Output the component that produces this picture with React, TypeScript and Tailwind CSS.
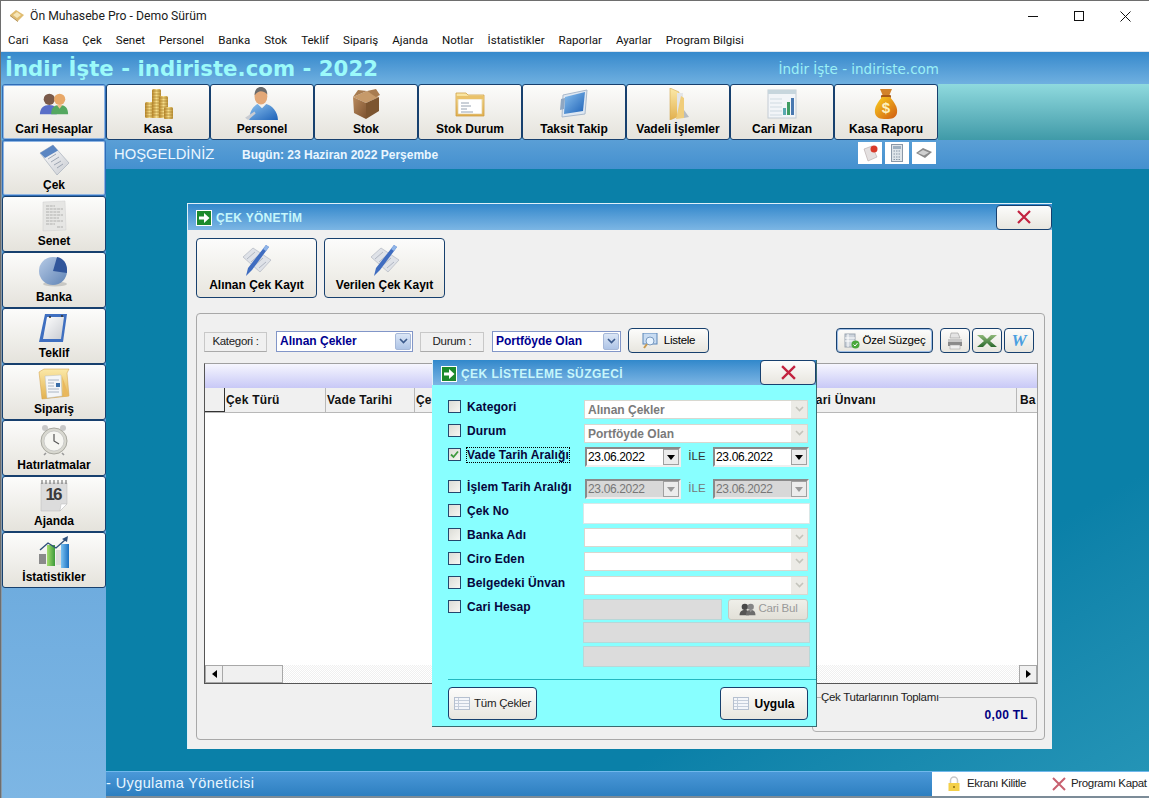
import React from "react";

const sans = "font-['Liberation_Sans',Arial,sans-serif]";

function Defs() {
  return (
    <svg className="absolute w-0 h-0" aria-hidden="true">
      <defs>
        <linearGradient id="gGold" x1="0" y1="0" x2="1" y2="0"><stop offset="0" stopColor="#b8862b" /><stop offset=".5" stopColor="#f6dd8a" /><stop offset="1" stopColor="#b98f35" /></linearGradient>
        <linearGradient id="gBlue" x1="0" y1="0" x2="1" y2="1"><stop offset="0" stopColor="#8bc1ee" /><stop offset="1" stopColor="#1d62b8" /></linearGradient>
        <linearGradient id="gFolder" x1="0" y1="0" x2="0" y2="1"><stop offset="0" stopColor="#fbe9a8" /><stop offset="1" stopColor="#e2b04e" /></linearGradient>
        <linearGradient id="gBox" x1="0" y1="0" x2="1" y2="1"><stop offset="0" stopColor="#b98a5c" /><stop offset="1" stopColor="#7d5330" /></linearGradient>
        <linearGradient id="gBag" x1="0" y1="0" x2="1" y2="1"><stop offset="0" stopColor="#fbd01f" /><stop offset="1" stopColor="#cf5a12" /></linearGradient>
        <linearGradient id="gPaper" x1="0" y1="0" x2="1" y2="1"><stop offset="0" stopColor="#ffffff" /><stop offset="1" stopColor="#c9ccd2" /></linearGradient>
        <linearGradient id="gPie" x1="0" y1="0" x2="1" y2="1"><stop offset="0" stopColor="#b7cbe6" /><stop offset="1" stopColor="#5f83b5" /></linearGradient>
        <linearGradient id="gGreen" x1="0" y1="0" x2="1" y2="0"><stop offset="0" stopColor="#a4dc6e" /><stop offset="1" stopColor="#3c9a3a" /></linearGradient>
        <linearGradient id="gBar" x1="0" y1="0" x2="1" y2="0"><stop offset="0" stopColor="#7cc3f2" /><stop offset="1" stopColor="#1b6fc0" /></linearGradient>
        <linearGradient id="gXl" x1="0" y1="0" x2="0" y2="1"><stop offset="0" stopColor="#8fb878" /><stop offset="1" stopColor="#2c6a2e" /></linearGradient>
      </defs>
    </svg>
  );
}

const I = ({ s = 32, children }: { s?: number; children: React.ReactNode }) => (
  <svg width={s} height={s} viewBox="0 0 32 32" className="shrink-0">{children}</svg>
);

const People = ({ s = 30, className = "" }: { s?: number; className?: string }) => (
  <svg width={s} height={s} viewBox="0 0 32 32" className={`shrink-0 ${className}`}>
    <circle cx="11" cy="11" r="6" fill="#7a5a4a" />
    <path d="M1 27c0-7 4-10 10-10s8 3 8 10z" fill="#5a6fc8" />
    <circle cx="22" cy="11" r="6" fill="#e8a868" />
    <path d="M13 27c0-7 3-10 9-10s9 3 9 10z" fill="#55a860" />
    <path d="M19 17l3 4 3-4z" fill="#f0c090" />
  </svg>
);
const Coins = () => (
  <I>
    {[[3, 14, 16], [10, 1, 29], [17, 8, 22], [22, 19, 12]].map(([x, y, h], i) => (
      <g key={i}>
        <rect x={x} y={y} width="9" height={h} rx="1.5" fill="url(#gGold)" />
        {Array.from({ length: Math.floor(h / 3) }).map((_, k) => (
          <line key={k} x1={x} x2={x + 9} y1={y + 3 * k + 2} y2={y + 3 * k + 2} stroke="#a67c25" strokeWidth=".7" />
        ))}
      </g>
    ))}
  </I>
);
const Person = () => (
  <svg width="34" height="34" viewBox="0 0 32 32" className="shrink-0">
    <ellipse cx="15" cy="9" rx="6" ry="7.5" fill="#e3a878" />
    <path d="M9 8c0-6 3-8 6-8s6 2 6 7c-2-2-4-3-6-3s-4 1-6 4z" fill="#6b6b6b" />
    <path d="M4 31c0-9 5-14 8-15l4 4 4-4c5 1 11 7 11 15z" fill="url(#gBlue)" />
    <path d="M0 29l9-6 1 2-7 6z" fill="#c9ccd2" />
  </svg>
);
const Box = () => (
  <I>
    <path d="M3 9l14-6 12 6-13 6z" fill="#c69a6a" />
    <path d="M3 9l13 6v16L4 25z" fill="url(#gBox)" />
    <path d="M16 15l13-6v14L16 31z" fill="#7c5530" />
    <path d="M17 3l9-2 4 6-4 2zM3 9L8 2l9 1z" fill="#a87c50" />
  </I>
);
const FolderDoc = () => (
  <I>
    <path d="M2 5h10l2 2h16v21H2z" fill="url(#gFolder)" stroke="#cf9f45" strokeWidth=".8" />
    <rect x="4" y="11" width="24" height="15" fill="#fff" stroke="#d9c48a" strokeWidth=".6" />
    <path d="M7 15h8M7 18h10M7 21h6M7 24h12" stroke="#8a97a8" strokeWidth=".9" />
    <rect x="2" y="8" width="28" height="3" fill="#eac26a" />
  </I>
);
const Tilted = () => (
  <I>
    <path d="M5 7L29 2l-2 24-23 3z" fill="#dfe8f2" stroke="#a9b9cc" />
    <path d="M7 9l20-5-2 19-19 3z" fill="url(#gBlue)" />
    <path d="M3 11l4-1-1 11-4 1z" fill="#8fa7c2" />
  </I>
);
const FolderV = () => (
  <I>
    <path d="M8 0l9 4v24l-9 4z" fill="url(#gFolder)" stroke="#d5a94f" strokeWidth=".6" />
    <path d="M15 5h6v24h-6z" fill="#e3e5e8" />
    <path d="M19 8l3 2v20l-8 1z" fill="#f0cd7a" />
    <path d="M22 22l5 7-5 1z" fill="#b8bcc0" />
  </I>
);
const ChartDoc = () => (
  <I>
    <rect x="2" y="2" width="28" height="28" fill="#f2f5f8" stroke="#c3ccd4" />
    <rect x="2" y="2" width="28" height="4" fill="#c7d6dd" />
    <path d="M4 11h12M4 15h12M4 19h12M4 23h12M4 27h12" stroke="#d0dbe2" />
    <rect x="17" y="20" width="3" height="7" fill="#5aa9b0" />
    <rect x="21" y="14" width="3" height="13" fill="#3f9c62" />
    <rect x="25" y="10" width="3" height="17" fill="#4878b0" />
  </I>
);
const Bag = () => (
  <I>
    <path d="M10 1h12l-3 7h-6z" fill="#d2822a" />
    <rect x="11" y="7" width="10" height="3" rx="1" fill="#a85a18" />
    <path d="M12 9h8c4 5 8 10 7 16-1 5-5 6-11 6S6 30 5 25c-1-6 3-11 7-16z" fill="url(#gBag)" />
    <text x="16" y="25" fontSize="15" fontWeight="700" textAnchor="middle" fill="#fdf2c0" fontFamily="Liberation Sans">$</text>
  </I>
);
const Cheque = () => (
  <I s={32}>
    <path d="M2 9L15 1l16 18-12 12z" fill="url(#gPaper)" stroke="#9ca6b4" strokeWidth=".6" />
    <path d="M2 9L15 1l5 5.5L7 14z" fill="#5b86c2" />
    <path d="M10 15l8-5M13 18l8-5M16 21l7-4M19 24l6-4" stroke="#8b95a5" strokeWidth=".8" />
  </I>
);
const Paper = () => (
  <I>
    <path d="M5 2l22-1 1 29-23 1z" fill="#e6e6e4" stroke="#cfcfcf" strokeWidth=".5" />
    <path d="M8 6h9M8 9h17M8 12h14M8 15h17M8 18h13M8 21h17M8 24h9M19 27h6" stroke="#9a9a9a" strokeWidth=".7" strokeDasharray="3 .7" />
  </I>
);
const Pie = () => (
  <I>
    <ellipse cx="17" cy="28" rx="12" ry="2.5" fill="#c8c8c4" />
    <circle cx="15" cy="15" r="14" fill="url(#gPie)" />
    <path d="M15 15L19 1c6 1 10 6 10 13v3z" fill="#31569b" />
  </I>
);
const Note = () => (
  <I>
    <path d="M7 2h22l-4 28H1z" fill="#3f6fc0" />
    <path d="M9 5h17l-3 22H5z" fill="url(#gPaper)" />
    <circle cx="12" cy="5" r="1" fill="#333" /><circle cx="24" cy="4" r="1" fill="#333" />
  </I>
);
const Order = () => (
  <I>
    <path d="M1 4l5-3h25l-2 4 2 23-27 3z" fill="url(#gFolder)" stroke="#d09c45" strokeWidth=".5" />
    <path d="M7 8l16-1 1 21-15 2z" fill="#f4f6f8" stroke="#b9c0c7" strokeWidth=".5" />
    <path d="M10 12h11M10 15h6M10 18h6M10 21h11M10 24h11" stroke="#9aa7b5" strokeWidth=".8" />
    <rect x="18" y="15" width="4" height="4" fill="#3a6ea8" />
    <path d="M24 8l7 20-5 1z" fill="#e9b85e" />
  </I>
);
const Clock = () => (
  <I>
    <circle cx="7" cy="4" r="3" fill="#c8c8c8" /><circle cx="25" cy="4" r="3" fill="#c8c8c8" />
    <circle cx="16" cy="17" r="13" fill="#d8d8d0" stroke="#a8a8a0" />
    <circle cx="16" cy="17" r="10" fill="#f6f6f2" stroke="#bbb" strokeWidth=".6" />
    <path d="M16 10v7l5 3" stroke="#555" strokeWidth="1.2" fill="none" />
    <path d="M8 29l-2 2M24 29l2 2" stroke="#999" strokeWidth="1.6" />
  </I>
);
const Cal = () => (
  <I>
    <path d="M3 3h26v21l-7 7H3z" fill="#dcdcdc" stroke="#bbb" strokeWidth=".5" />
    <path d="M4 0v4M8 0v4M12 0v4M16 0v4M20 0v4M24 0v4M28 0v4" stroke="#666" />
    <text x="16" y="20" fontSize="17" fontWeight="700" textAnchor="middle" fill="#3a3a3a" fontFamily="Liberation Sans" textLength="17">16</text>
    <path d="M22 31l1-7 6 0z" fill="#fff" stroke="#bbb" strokeWidth=".5" />
  </I>
);
const Stats = () => (
  <I>
    <rect x="1" y="18" width="7" height="10" fill="#8a8a8a" />
    <rect x="9" y="9" width="8" height="21" fill="url(#gGreen)" />
    <rect x="18" y="14" width="6" height="15" fill="#dcdcdc" />
    <rect x="23" y="8" width="8" height="24" fill="url(#gBar)" />
    <path d="M2 14l8-7 8 5 9-8" fill="none" stroke="#2e4f7a" strokeWidth="1.4" />
    <path d="M24 3l6-3-1 6z" fill="#2e4f7a" />
  </I>
);
const Pen = () => (
  <I>
    <path d="M2 12l10-9 18 12-11 12z" fill="#dfe2e8" stroke="#a9afba" strokeWidth=".6" />
    <path d="M6 14l8-7M10 17l8-7M14 20l8-7M18 23l7-6" stroke="#aab1bd" strokeWidth=".9" />
    <path d="M25 0l3 2L11 25l-6 6 2-8z" fill="#3f6cc0" />
    <path d="M25 0l3 2-3 4-3-2z" fill="#8fb4e8" />
  </I>
);
const Arrow = ({ className = "" }: { className?: string }) => (
  <span className={`flex items-center justify-center w-[16px] h-[16px] bg-[#1c8a2c] border border-white shrink-0 ${className}`}>
    <svg width="12" height="12" viewBox="0 0 12 12"><path d="M1 4.5h5V1l5.5 5L6 11V7.5H1z" fill="#fff" /></svg>
  </span>
);
const RedX = ({ s = 14 }: { s?: number }) => (
  <svg width={s} height={s} viewBox="0 0 14 14"><path d="M1 1l12 12M13 1L1 13" stroke="#c2223f" strokeWidth="2.2" /></svg>
);
const ListIcon = () => (
  <svg width="16" height="13" viewBox="0 0 16 13" className="shrink-0">
    <rect x=".5" y=".5" width="15" height="12" fill="#f4f6fa" stroke="#b5c0d0" />
    <path d="M1 3.5h14M1 6.5h14M1 9.5h14M4.5 1v11" stroke="#c5cedb" />
  </svg>
);

const tops: [string, React.ReactNode, boolean?][] = [
  ["Cari Hesaplar", <People />, true],
  ["Kasa", <Coins />],
  ["Personel", <Person />],
  ["Stok", <Box />],
  ["Stok Durum", <FolderDoc />],
  ["Taksit Takip", <Tilted />],
  ["Vadeli İşlemler", <FolderV />],
  ["Cari Mizan", <ChartDoc />],
  ["Kasa Raporu", <Bag />],
];
const sides: [string, React.ReactNode, boolean?][] = [
  ["Çek", <Cheque />, true],
  ["Senet", <Paper />],
  ["Banka", <Pie />],
  ["Teklif", <Note />],
  ["Sipariş", <Order />],
  ["Hatırlatmalar", <Clock />],
  ["Ajanda", <Cal />],
  ["İstatistikler", <Stats />],
];
const menu = ["Cari", "Kasa", "Çek", "Senet", "Personel", "Banka", "Stok", "Teklif", "Sipariş", "Ajanda", "Notlar", "İstatistikler", "Raporlar", "Ayarlar", "Program Bilgisi"];

function NavBtn({ label, icon, active }: { label: string; icon: React.ReactNode; active?: boolean }) {
  return (
    <div className={`w-[104px] h-[56px] shrink-0 rounded-[3px] border flex flex-col items-center bg-gradient-to-b from-[#fcfcfb] to-[#e5e3dc] ${active ? "border-[#2f6db8] shadow-[inset_0_0_0_1px_#8db4e2]" : "border-[#17406e]"}`}>
      <div className="h-[37px] flex items-center justify-center">{icon}</div>
      <span className="text-[12px] font-bold leading-[14px] text-black">{label}</span>
    </div>
  );
}

function Btn({ className = "", children }: { className?: string; children: React.ReactNode }) {
  return (
    <div className={`rounded-[4px] border border-[#17406e] bg-gradient-to-b from-[#fcfcfb] to-[#e8e6df] flex items-center justify-center shrink-0 ${className}`}>
      {children}
    </div>
  );
}

function Chevron({ color = "#9aa0a8" }: { color?: string }) {
  return <svg width="9" height="6" viewBox="0 0 9 6"><path d="M1 1l3.5 3.5L8 1" fill="none" stroke={color} strokeWidth="1.6" /></svg>;
}

function BlueCombo({ text, w }: { text: string; w: string }) {
  return (
    <div className={`h-[21px] ${w} mt-[1px] shrink-0 bg-white border border-[#8296c8] flex items-center justify-between pl-[3px] pr-[1px]`}>
      <span className="text-[12px] font-bold text-[#000090]">{text}</span>
      <span className="w-[16px] h-[17px] rounded-[2px] bg-gradient-to-b from-[#dbe6f6] to-[#aec4e6] border border-[#a6b8d8] flex items-center justify-center"><Chevron color="#3b5a8c" /></span>
    </div>
  );
}

function GrayLabel({ text, w }: { text: string; w: string }) {
  return (
    <div className={`h-[20px] ${w} mt-[2px] shrink-0 bg-[#f0f0f0] border border-[#c8c8c8] border-b-[#aaa] flex items-center justify-center text-[11.5px] tracking-[-0.3px] text-[#222]`}>{text}</div>
  );
}

function CheckBox({ checked }: { checked?: boolean }) {
  return (
    <span className="w-[13px] h-[13px] shrink-0 border border-[#24486e] bg-gradient-to-br from-[#dcdcd6] to-[#f6f6f2] flex items-center justify-center">
      {checked && <svg width="11" height="11" viewBox="0 0 11 11"><path d="M2 5.5l2.5 2.5L9 2.5" fill="none" stroke="#3f9a3f" strokeWidth="1.8" /></svg>}
    </span>
  );
}

function FCombo({ text }: { text?: string }) {
  return (
    <div className="ml-[1px] w-[224px] h-[19px] bg-white border border-[#d8d8d0] flex items-center justify-between pl-[3px]">
      <span className="text-[12px] font-bold text-[#7a7a7a] pt-[1px]">{text}</span>
      <span className="w-[16px] h-[17px] bg-[#ecebe6] flex items-center justify-center"><Chevron color="#c4c4bc" /></span>
    </div>
  );
}

function DateBox({ w, off }: { w: string; off?: boolean }) {
  return (
    <div className={`${w} h-[20px] shrink-0 border-2 border-t-[#8a8a8a] border-l-[#8a8a8a] border-r-[#efefef] border-b-[#efefef] flex items-center justify-between ${off ? "bg-[#d8d8d8] text-[#777]" : "bg-white text-black"}`}>
      <span className="text-[12px] tracking-[-0.35px] pl-[1px]">23.06.2022</span>
      <span className="w-[16px] h-[16px] bg-[#ececec] border border-[#a0a0a0] flex items-center justify-center">
        <svg width="8" height="5" viewBox="0 0 8 5"><path d="M0 0h8L4 5z" fill={off ? "#999" : "#000"} /></svg>
      </span>
    </div>
  );
}

function FRow({ label, checked, focus, className = "", children }: { label: string; checked?: boolean; focus?: boolean; className?: string; children?: React.ReactNode }) {
  return (
    <div className={`h-[24px] flex items-center ${className}`}>
      <div className="w-[151px] pl-[16px] flex items-center gap-[6px] -mt-[5px] shrink-0">
        <CheckBox checked={checked} />
        <span className={`text-[12px] font-bold leading-[14px] text-[#06063c] tracking-[0.1px] whitespace-nowrap ${focus ? "outline-1 outline-dotted outline-black" : ""}`}>{label}</span>
      </div>
      {children}
    </div>
  );
}

function Th({ w, children, className = "" }: { w: string; children?: React.ReactNode; className?: string }) {
  return <div className={`${w} shrink-0 h-full border-r border-[#b8b8b8] flex items-center pl-[1px] text-[12px] font-bold text-[#111] tracking-[0.2px] whitespace-nowrap ${className}`}>{children}</div>;
}

export default function App() {
  return (
    <div className={`w-[1149px] h-[798px] overflow-hidden flex flex-col bg-white border-t border-l border-[#6e6e6e] ${sans}`}>
      <Defs />
      {/* Title bar */}
      <div className="h-[30px] shrink-0 flex items-center justify-between bg-white">
        <div className="flex items-center pl-[8px] gap-[5px]">
          <svg width="16" height="14" viewBox="0 0 16 14"><path d="M1 6l6-5 8 5-6 6z" fill="#e0bc70" /><path d="M4 6l4-3 4 3-4 3z" fill="#f6e6b8" /><path d="M1 6l8 6v1L1 7z" fill="#a8813a" /></svg>
          <span className="font-['Roboto',sans-serif] text-[12.2px] text-[#1b1b1b]">Ön Muhasebe Pro - Demo Sürüm</span>
        </div>
        <div className="flex items-center mr-[1px]">
          <div className="w-[46px] h-[30px] flex items-center justify-center"><svg width="10" height="10" viewBox="0 0 10 10"><path d="M0 5.5h10" stroke="#111" /></svg></div>
          <div className="w-[46px] h-[30px] flex items-center justify-center"><svg width="10" height="10" viewBox="0 0 10 10"><rect x=".5" y=".5" width="9" height="9" fill="none" stroke="#111" /></svg></div>
          <div className="w-[46px] h-[30px] flex items-center justify-center"><svg width="11" height="11" viewBox="0 0 11 11"><path d="M.5.5l10 10M10.5.5l-10 10" stroke="#111" /></svg></div>
        </div>
      </div>
      {/* Menu */}
      <div className="h-[21px] shrink-0 flex items-center pl-[7px] gap-[14px] bg-white font-['Roboto',sans-serif] text-[11.55px] text-[#111] border-b border-[#dfe6ee]">
        {menu.map((m) => <span key={m}>{m}</span>)}
      </div>
      {/* Banner */}
      <div className="h-[32px] shrink-0 flex items-center justify-between bg-gradient-to-b from-[#3589cc] to-[#6fb0e0] pl-[4px] pt-[2px]">
        <span className="font-['DejaVu_Sans',sans-serif] text-[21.3px] font-bold text-[#9bfafa] leading-none">İndir İşte - indiriste.com - 2022</span>
        <span className="font-['DejaVu_Sans',sans-serif] text-[13.5px] text-[#9bf0f6] mr-[210px]">İndir İşte - indiriste.com</span>
      </div>
      {/* Toolbar */}
      <div className="h-[56px] shrink-0 flex bg-gradient-to-b from-[#8fdade] to-[#3f9aa8]">
        <div className="flex bg-[#6aaede] pl-[1px]">
          {tops.map(([l, ic, a]) => <NavBtn key={l} label={l} icon={ic} active={a} />)}
        </div>
      </div>
      <div className="flex-1 min-h-0 flex">
        {/* Sidebar */}
        <div className="w-[105px] shrink-0 flex flex-col bg-gradient-to-b from-[#4f97d2] to-[#7db6e4] border-l border-[#8a9aa8]">
          {sides.map(([l, ic, a]) => <NavBtn key={l} label={l} icon={ic} active={a} />)}
        </div>
        {/* Right */}
        <div className="flex-1 min-w-0 flex flex-col">
          <div className="h-[29px] shrink-0 flex items-center bg-gradient-to-b from-[#5a9fd6] to-[#4490cf] pl-[8px] text-white">
            <span className="text-[14.8px] text-[#eaf6ff] w-[128px]">HOŞGELDİNİZ</span>
            <span className="text-[12px] font-bold text-[#eaf6ff] w-[616px]">Bugün: 23 Haziran 2022 Perşembe</span>
            <div className="flex gap-[3px] -mt-[3px]">
              <div className="w-[24px] h-[22px] bg-white flex items-center justify-center">
                <svg width="16" height="18" viewBox="0 0 16 18"><path d="M2 5l8-3 5 11-9 4z" fill="#e4e0e0" stroke="#a89a9a" strokeWidth=".5" /><circle cx="12" cy="5" r="3.5" fill="#d83a2a" /></svg>
              </div>
              <div className="w-[24px] h-[22px] bg-white flex items-center justify-center">
                <svg width="12" height="18" viewBox="0 0 12 18"><rect x=".5" y=".5" width="11" height="17" fill="#dfe5ea" stroke="#8a98a8" /><rect x="2" y="2" width="8" height="3" fill="#9fb0c0" /><path d="M2.5 7h7M2.5 10h7M2.5 13h7M2.5 15.5h7" stroke="#8796a6" strokeDasharray="1.5 1" /></svg>
              </div>
              <div className="w-[24px] h-[22px] bg-white flex items-center justify-center">
                <svg width="18" height="12" viewBox="0 0 18 12"><path d="M1 6l7-5 9 4-7 6z" fill="#8a8a8a" /><path d="M3 6l5-3 6 2.5-5 3z" fill="#d0d0d0" /></svg>
              </div>
            </div>
          </div>
          {/* Desktop */}
          <div className="flex-1 min-h-0 relative bg-gradient-to-br from-[#0a80a8] via-[#0a80a8] via-75% to-[#2494b6]">
            {/* Çek Yönetim window */}
            <div className="absolute left-[81px] top-[34px] w-[865px] h-[546px] bg-[#f0f0f0] border-t border-l border-[#dff0f8] flex flex-col">
              <div className="h-[26px] shrink-0 flex items-center justify-between bg-gradient-to-b from-[#3088cb] to-[#7cb6e4]">
                <div className="flex items-center gap-[4px] pl-[8px] pt-[1px]">
                  <Arrow />
                  <span className="text-[12px] font-bold text-[#c6f6fb] tracking-[0.3px]">ÇEK YÖNETİM</span>
                </div>
                <Btn className="w-[56px] h-[25px]"><RedX /></Btn>
              </div>
              <div className="flex gap-[7px] pl-[8px] pt-[8px]">
                <Btn className="w-[121px] h-[60px] flex-col"><Pen /><span className="text-[12px] font-bold leading-[14px] mt-[1px]">Alınan Çek Kayıt</span></Btn>
                <Btn className="w-[121px] h-[60px] flex-col"><Pen /><span className="text-[12px] font-bold leading-[14px] mt-[1px]">Verilen Çek Kayıt</span></Btn>
              </div>
              {/* Panel */}
              <div className="ml-[8px] mt-[15px] w-[849px] h-[427px] rounded-[4px] border border-[#a8a8a8] flex flex-col px-[7px]">
                <div className="h-[49px] shrink-0 flex items-center pt-[4px]">
                  <GrayLabel text="Kategori :" w="w-[63px]" />
                  <div className="w-[9px] shrink-0" />
                  <BlueCombo text="Alınan Çekler" w="w-[137px]" />
                  <div className="w-[7px] shrink-0" />
                  <GrayLabel text="Durum :" w="w-[64px]" />
                  <div className="w-[8px] shrink-0" />
                  <BlueCombo text="Portföyde Olan" w="w-[129px]" />
                  <div className="w-[7px] shrink-0" />
                  <Btn className="w-[81px] h-[25px] gap-[6px]">
                    <svg width="16" height="16" viewBox="0 0 16 16"><rect x="1" y="0" width="14" height="11" fill="#c8dcf2" stroke="#5a86b8" /><circle cx="8" cy="8" r="4" fill="#e8f4ff" stroke="#7a9ac0" /><path d="M5 11l-3 4" stroke="#c89a50" strokeWidth="2" /></svg>
                    <span className="text-[11.5px] tracking-[-0.25px]">Listele</span>
                  </Btn>
                  <div className="flex-1" />
                  <Btn className="w-[97px] h-[25px] gap-[3px] border-[#2f6db8] shadow-[inset_0_0_0_1px_#9dbde6]">
                    <svg width="16" height="16" viewBox="0 0 16 16"><rect x="1" y="1" width="10" height="13" fill="#cdd4dc" stroke="#9aa4b0" /><path d="M1 5h10M1 8h10M4 1v13" stroke="#fff" /><circle cx="11.5" cy="11.5" r="4" fill="#4aa83a" /><path d="M9.5 11.5l1.5 1.5 2.5-3" stroke="#fff" fill="none" /></svg>
                    <span className="text-[11.5px] tracking-[-0.2px]">Özel Süzgeç</span>
                  </Btn>
                  <div className="w-[7px] shrink-0" />
                  <Btn className="w-[30px] h-[25px]">
                    <svg width="18" height="18" viewBox="0 0 18 18"><path d="M5 1h7l2 5H4z" fill="#e4e4e4" stroke="#999" strokeWidth=".6" /><path d="M2 7h14v7H2z" fill="#8a8a8a" /><path d="M2 7h14v3H2z" fill="#c8c8c8" /><rect x="4" y="13" width="10" height="4" fill="#efefef" stroke="#999" strokeWidth=".5" /></svg>
                  </Btn>
                  <div className="w-[2px] shrink-0" />
                  <Btn className="w-[30px] h-[25px]">
                    <svg width="20" height="12" viewBox="0 0 20 12"><path d="M0 0h6l4 4 4-4h6l-7 6 7 6h-6L10 8l-4 4H0l7-6z" fill="url(#gXl)" /></svg>
                  </Btn>
                  <div className="w-[2px] shrink-0" />
                  <Btn className="w-[30px] h-[25px]">
                    <span className="font-['Liberation_Serif',serif] italic font-bold text-[17px] text-[#4a9fe0] leading-none">W</span>
                  </Btn>
                  <div className="w-[3px] shrink-0" />
                </div>
                {/* Grid */}
                <div className="w-[834px] h-[321px] shrink-0 bg-white border border-[#a0a0a0] border-l-[#555] border-b-[#555] flex flex-col">
                  <div className="h-[24px] shrink-0 bg-gradient-to-b from-[#f6f6fe] to-[#c8c8f6]" />
                  <div className="h-[25px] shrink-0 bg-[#f0f0f0] border-b border-[#b8b8b8] flex">
                    <div className="w-[20px] shrink-0 h-full border-r border-b border-[#333]" />
                    <Th w="w-[101px]">Çek Türü</Th>
                    <Th w="w-[89px]">Vade Tarihi</Th>
                    <Th w="w-[391px]">Çek No</Th>
                    <Th w="w-[211px]">Cari Ünvanı</Th>
                    <div className="flex-1 flex items-center pl-[3px] text-[12px] font-bold text-[#111] overflow-hidden">Ba</div>
                  </div>
                  <div className="flex-1" />
                  <div className="h-[18px] shrink-0 flex bg-[repeating-conic-gradient(#f0f0f0_0_25%,#ffffff_0_50%)] bg-[length:2px_2px]">
                    <div className="w-[18px] h-full bg-[#f0f0f0] border border-[#a8a8a8] flex items-center justify-center"><svg width="5" height="8" viewBox="0 0 5 8"><path d="M5 0v8L0 4z" fill="#000" /></svg></div>
                    <div className="w-[60px] h-full bg-[#f0f0f0] border border-[#a8a8a8] border-l-0" />
                    <div className="flex-1" />
                    <div className="w-[18px] h-full bg-[#f0f0f0] border border-[#a8a8a8] flex items-center justify-center"><svg width="5" height="8" viewBox="0 0 5 8"><path d="M0 0v8l5-4z" fill="#000" /></svg></div>
                  </div>
                </div>
                {/* Total */}
                <div className="flex justify-end pt-[13px]">
                  <div className="relative w-[225px] h-[35px] shrink-0 rounded-[4px] border border-[#b0b0b0]">
                    <span className="absolute left-[8px] -top-[7px] bg-[#f0f0f0] text-[11.5px] leading-[13px] tracking-[-0.3px] text-[#222]">Çek Tutarlarının Toplamı</span>
                    <span className="absolute right-[8px] top-[8px] text-[12px] font-bold text-[#000080] tracking-[0.3px]">0,00 TL</span>
                  </div>
                </div>
              </div>
            </div>
            {/* Süzgeç dialog */}
            <div className="absolute left-[326px] top-[191px] w-[385px] h-[367px] bg-[#88ffff] border-b border-r border-[#3a6a70] flex flex-col">
              <div className="h-[25px] shrink-0 flex items-center justify-between bg-gradient-to-b from-[#3088cb] to-[#7cb6e4] border-l border-[#dff0f8]">
                <div className="flex items-center gap-[4px] pl-[8px] pt-[2px]">
                  <Arrow />
                  <span className="text-[12px] font-bold text-[#c6f6fb] tracking-[0.45px]">ÇEK LİSTELEME SÜZGECİ</span>
                </div>
                <Btn className="w-[56px] h-[25px]"><RedX s={15} /></Btn>
              </div>
              <div className="flex flex-col pt-[12px]">
                <FRow label="Kategori"><FCombo text="Alınan Çekler" /></FRow>
                <FRow label="Durum"><FCombo text="Portföyde Olan" /></FRow>
                <FRow label="Vade Tarih Aralığı" checked focus>
                  <div className="flex items-center ml-[2px]">
                    <DateBox w="w-[96px]" />
                    <span className="w-[32px] text-center text-[11.5px] text-[#333]">İLE</span>
                    <DateBox w="w-[96px]" />
                  </div>
                </FRow>
                <FRow label="İşlem Tarih Aralığı" className="mt-[8px]">
                  <div className="flex items-center ml-[2px]">
                    <DateBox w="w-[96px]" off />
                    <span className="w-[32px] text-center text-[11.5px] text-[#777]">İLE</span>
                    <DateBox w="w-[96px]" off />
                  </div>
                </FRow>
                <FRow label="Çek No"><div className="w-[227px] h-[21px] bg-white border border-[#d8e8e8]" /></FRow>
                <FRow label="Banka Adı"><FCombo /></FRow>
                <FRow label="Ciro Eden"><FCombo /></FRow>
                <FRow label="Belgedeki Ünvan"><FCombo /></FRow>
                <FRow label="Cari Hesap">
                  <div className="w-[139px] h-[21px] bg-[#dcdcdc] border border-[#b8d8d8]" />
                  <div className="ml-[6px] w-[80px] h-[21px] rounded-[3px] bg-gradient-to-b from-[#efefe9] to-[#e2e0d8] border border-[#c8c8c0] flex items-center justify-center gap-[3px]">
                    <People s={17} className="grayscale brightness-75" />
                    <span className="text-[11.5px] tracking-[-0.25px] text-[#999]">Cari Bul</span>
                  </div>
                </FRow>
                <div className="ml-[151px] w-[227px] h-[21px] bg-[#dcdcdc] border border-[#b8d8d8] mt-[1px]" />
                <div className="ml-[151px] w-[227px] h-[21px] bg-[#dcdcdc] border border-[#b8d8d8] mt-[3px]" />
              </div>
              <div className="ml-[16px] mt-[12px] h-[1px] bg-[#22b8c0]" />
              <div className="flex justify-between pl-[16px] pr-[8px] pt-[7px]">
                <Btn className="w-[89px] h-[33px] gap-[4px]"><ListIcon /><span className="text-[11.5px] tracking-[-0.25px] text-[#222]">Tüm Çekler</span></Btn>
                <Btn className="w-[88px] h-[33px] gap-[5px]"><ListIcon /><span className="text-[12px] font-bold">Uygula</span></Btn>
              </div>
            </div>
          </div>
          {/* Status */}
          <div className="h-[27px] shrink-0 flex items-stretch border-t border-[#70b8ec] bg-gradient-to-b from-[#4a98d8] to-[#2d7fc0] border-b-2 border-b-[#7c8c98]">
            <span className="flex-1 flex items-center text-[14.5px] text-[#e8f6ff] tracking-[0.4px]">- Uygulama Yöneticisi</span>
            <div className="w-[217px] bg-white flex items-center text-[11.5px] tracking-[-0.35px] text-[#222] whitespace-nowrap">
              <svg width="14" height="16" viewBox="0 0 14 16" className="ml-[15px] shrink-0"><path d="M3.5 7V4.5a3.5 3.5 0 017 0V7" fill="none" stroke="#c8c8c8" strokeWidth="1.5" /><rect x="1.5" y="7" width="11" height="8" fill="#f4d04a" /><circle cx="7" cy="11" r="1" fill="#8a6a10" /></svg>
              <span className="ml-[6px] w-[65px] shrink-0">Ekranı Kilitle</span>
              <svg width="14" height="14" viewBox="0 0 14 14" className="ml-[20px] shrink-0"><path d="M1 1l12 12M13 1L1 13" stroke="#c86070" strokeWidth="2" /></svg>
              <span className="ml-[5px]">Programı Kapat</span>
            </div>
          </div>
        </div>
      </div>
    </div>
  );
}
